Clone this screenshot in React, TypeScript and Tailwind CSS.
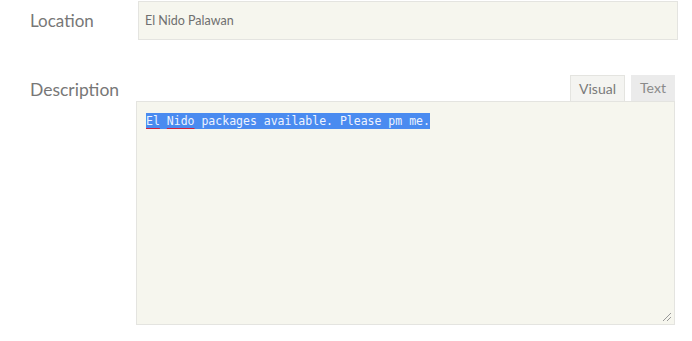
import React from "react";

const App = () => {
  return (
    <div className="w-[692px] h-[341px] bg-white font-['Lato',sans-serif] text-[#777]">
      {/* Location row */}
      <div className="flex pt-[1px]">
        <label className="w-[138px] pl-[30px] text-[17px] leading-[39px]">Location</label>
        <div className="w-[540px] h-[39px] border border-[#e4e4e0] bg-[#f6f6ee] px-[6px] text-[12.5px] leading-[37px] text-[#6f6f6f]">
          El Nido Palawan
        </div>
      </div>

      {/* Description row */}
      <div className="flex mt-[35px]">
        <label className="w-[136px] pl-[30px] pt-[4px] text-[17.5px] leading-[22px]">Description</label>
        <div className="w-[540px] flex flex-col">
          <div className="flex justify-end gap-[6px] pr-[1px]">
            <div className="h-[26px] w-[55px] border border-b-0 border-[#e4e4e0] bg-[#f4f4f1] text-center text-[14px] leading-[26px] text-[#7a7a7a]">
              Visual
            </div>
            <div className="h-[26px] w-[44px] bg-[#ebebeb] text-center text-[14px] leading-[26px] text-[#8a8a8a]">
              Text
            </div>
          </div>
          <div className="relative h-[224px] w-[539px] border border-[#e4e4e0] bg-[#f6f6ee] px-[9px] pt-[10px]">
            <div className="leading-[14px]">
              <span className="bg-[#4a8bf0] font-['DejaVu_Sans_Mono',monospace] text-[11.5px] text-[#eef3ff] py-[1px]">
                <span className="underline decoration-[#d02040] underline-offset-[3px]">El</span>{" "}
                <span className="underline decoration-[#d02040] underline-offset-[3px]">Nido</span>{" "}
                packages available. Please pm me.
              </span>
            </div>
            <svg className="absolute right-[2px] bottom-[2px]" width="10" height="10" viewBox="0 0 10 10">
              <line x1="9" y1="1" x2="1" y2="9" stroke="#999" strokeWidth="1" />
              <line x1="9" y1="5" x2="5" y2="9" stroke="#999" strokeWidth="1" />
            </svg>
          </div>
        </div>
      </div>
    </div>
  );
};

export default App;
